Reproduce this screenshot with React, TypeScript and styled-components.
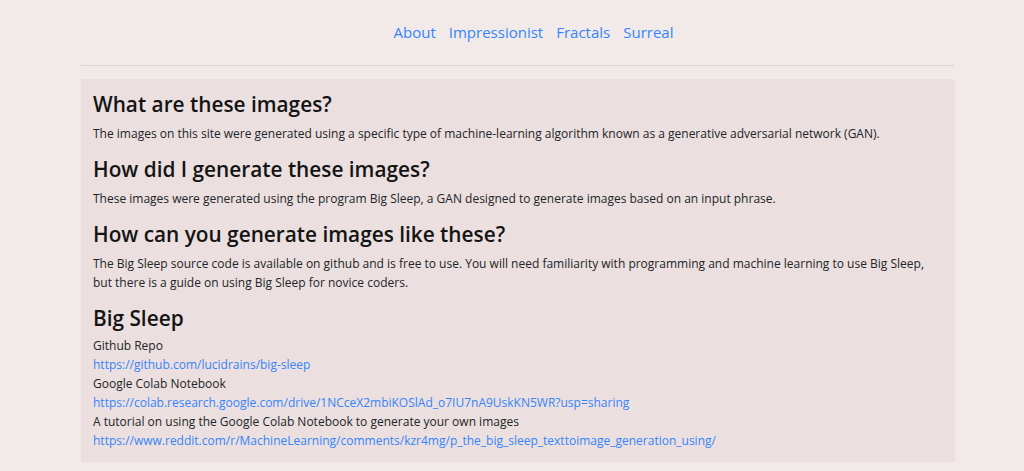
import React from "react";
import styled, { createGlobalStyle } from "styled-components";

const Global = createGlobalStyle`
  html, body { margin: 0; padding: 0; }
  body {
    background: #f2eae9;
    font-family: "Open Sans", "Noto Sans", sans-serif;
    color: #212529;
  }
`;

const Page = styled.div`
  width: 873px;
  margin-left: 81px;
`;

const Nav = styled.nav`
  display: flex;
  justify-content: center;
  gap: 13px;
  height: 66px;
  box-sizing: border-box;
  padding-top: 20px;
  padding-left: 32px;
  border-bottom: 1px solid #dcd3d2;
`;

const NavLink = styled.a`
  font-size: 15px;
  line-height: 24px;
  color: #3485fd;
  text-decoration: none;
`;

const Card = styled.main`
  margin-top: 13px;
  background: #ebdfdf;
  padding: 11px 12px 12px 12px;
  width: 874px;
  box-sizing: border-box;
`;

const Heading = styled.h2`
  margin: 0;
  font-size: 20.8px;
  font-weight: 600;
  line-height: 29px;
  color: #141414;
`;

const Section = styled.section<{ $gap?: number }>`
  display: flex;
  flex-direction: column;
  gap: ${(p) => p.$gap ?? 5}px;
  & + & { margin-top: 12px; }
`;

const Para = styled.p`
  margin: 0;
  font-size: 12px;
  line-height: 19px;
  white-space: nowrap;
`;

const Lines = styled.div`
  display: flex;
  flex-direction: column;
`;

const Line = styled.div`
  font-size: 12px;
  line-height: 19px;
`;

const Link = styled.a`
  font-size: 12px;
  line-height: 19px;
  color: #3485fd;
  text-decoration: none;
`;

export default function App() {
  return (
    <>
      <Global />
      <Page>
        <Nav>
          <NavLink href="#">About</NavLink>
          <NavLink href="#">Impressionist</NavLink>
          <NavLink href="#">Fractals</NavLink>
          <NavLink href="#">Surreal</NavLink>
        </Nav>
        <Card>
          <Section>
            <Heading>What are these images?</Heading>
            <Para>
              The images on this site were generated using a specific type of machine-learning algorithm known as a generative adversarial network (GAN).
            </Para>
          </Section>
          <Section>
            <Heading>How did I generate these images?</Heading>
            <Para>
              These images were generated using the program Big Sleep, a GAN designed to generate images based on an input phrase.
            </Para>
          </Section>
          <Section>
            <Heading>How can you generate images like these?</Heading>
            <Para>
              The Big Sleep source code is available on github and is free to use. You will need familiarity with programming and machine learning to use Big Sleep,
              <br />
              but there is a guide on using Big Sleep for novice coders.
            </Para>
          </Section>
          <Section $gap={3}>
            <Heading>Big Sleep</Heading>
            <Lines>
              <Line>Github Repo</Line>
              <Link href="#">https://github.com/lucidrains/big-sleep</Link>
              <Line>Google Colab Notebook</Line>
              <Link href="#">https://colab.research.google.com/drive/1NCceX2mbiKOSlAd_o7IU7nA9UskKN5WR?usp=sharing</Link>
              <Line>A tutorial on using the Google Colab Notebook to generate your own images</Line>
              <Link href="#">https://www.reddit.com/r/MachineLearning/comments/kzr4mg/p_the_big_sleep_texttoimage_generation_using/</Link>
            </Lines>
          </Section>
        </Card>
      </Page>
    </>
  );
}
